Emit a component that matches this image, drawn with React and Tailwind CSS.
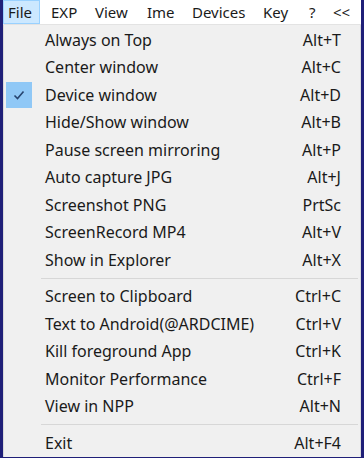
import React from "react";

const groups = [
  [
    ["Always on Top", "Alt+T"],
    ["Center window", "Alt+C"],
    ["Device window", "Alt+D", true],
    ["Hide/Show window", "Alt+B"],
    ["Pause screen mirroring", "Alt+P"],
    ["Auto capture JPG", "Alt+J"],
    ["Screenshot PNG", "PrtSc"],
    ["ScreenRecord MP4", "Alt+V"],
    ["Show in Explorer", "Alt+X"],
  ],
  [
    ["Screen to Clipboard", "Ctrl+C"],
    ["Text to Android(@ARDCIME)", "Ctrl+V"],
    ["Kill foreground App", "Ctrl+K"],
    ["Monitor Performance", "Ctrl+F"],
    ["View in NPP", "Alt+N"],
  ],
  [["Exit", "Alt+F4"]],
];

const menus = [
  ["EXP", "w-[44px]"],
  ["View", "w-[52px]"],
  ["Ime", "w-[45px]"],
  ["Devices", "w-[71px]"],
  ["Key", "w-[46px]"],
  ["?", "w-[24px]"],
  ["<<", "w-[24px]"],
];

function Row({ label, keys, checked }) {
  return (
    <div className="relative flex h-[27.5px] items-center justify-between pl-[41px] pr-[19px]">
      {checked && (
        <div className="absolute left-[2px] top-[1px] flex h-[26px] w-[26px] items-center justify-center bg-[#90c8f6]">
          <svg width="14" height="14" viewBox="0 0 14 14">
            <path d="M2.5 7.5 L5.5 10.5 L11.5 3.5" fill="none" stroke="#27446f" strokeWidth="1.6" />
          </svg>
        </div>
      )}
      <span>{label}</span>
      <span>{keys}</span>
    </div>
  );
}

export default function App() {
  return (
    <div className="flex h-[458px] w-[364px] flex-col border-x-[3px] border-b-[3px] border-[#1f1f78] bg-white font-['Noto_Sans',sans-serif] text-[16px] text-[#1a1a1a]">
      <div className="flex h-[25px] items-center border-b border-[#e3e3e3] bg-white text-[15px]">
        <div className="flex h-full w-[37px] items-center border border-[#99d1ff] bg-[#cce8ff] pl-[4px]">
          File
        </div>
        <div className="ml-[11px] flex h-full items-center">
          {menus.map(([m, w]) => (
            <div key={m} className={`${w} shrink-0`}>
              {m}
            </div>
          ))}
        </div>
      </div>
      <div className="flex flex-1 flex-col border-x border-[#d9d9d9] bg-[#f0f0f0] pt-[1px]">
        {groups.map((g, gi) => (
          <div key={gi}>
            {gi > 0 && (
              <div className="py-[4px] pl-[37px] pr-[2px]">
                <div className="h-[1px] bg-[#d7d7d7]" />
              </div>
            )}
            {g.map(([l, k, c]) => (
              <Row key={l} label={l} keys={k} checked={c} />
            ))}
          </div>
        ))}
      </div>
    </div>
  );
}
